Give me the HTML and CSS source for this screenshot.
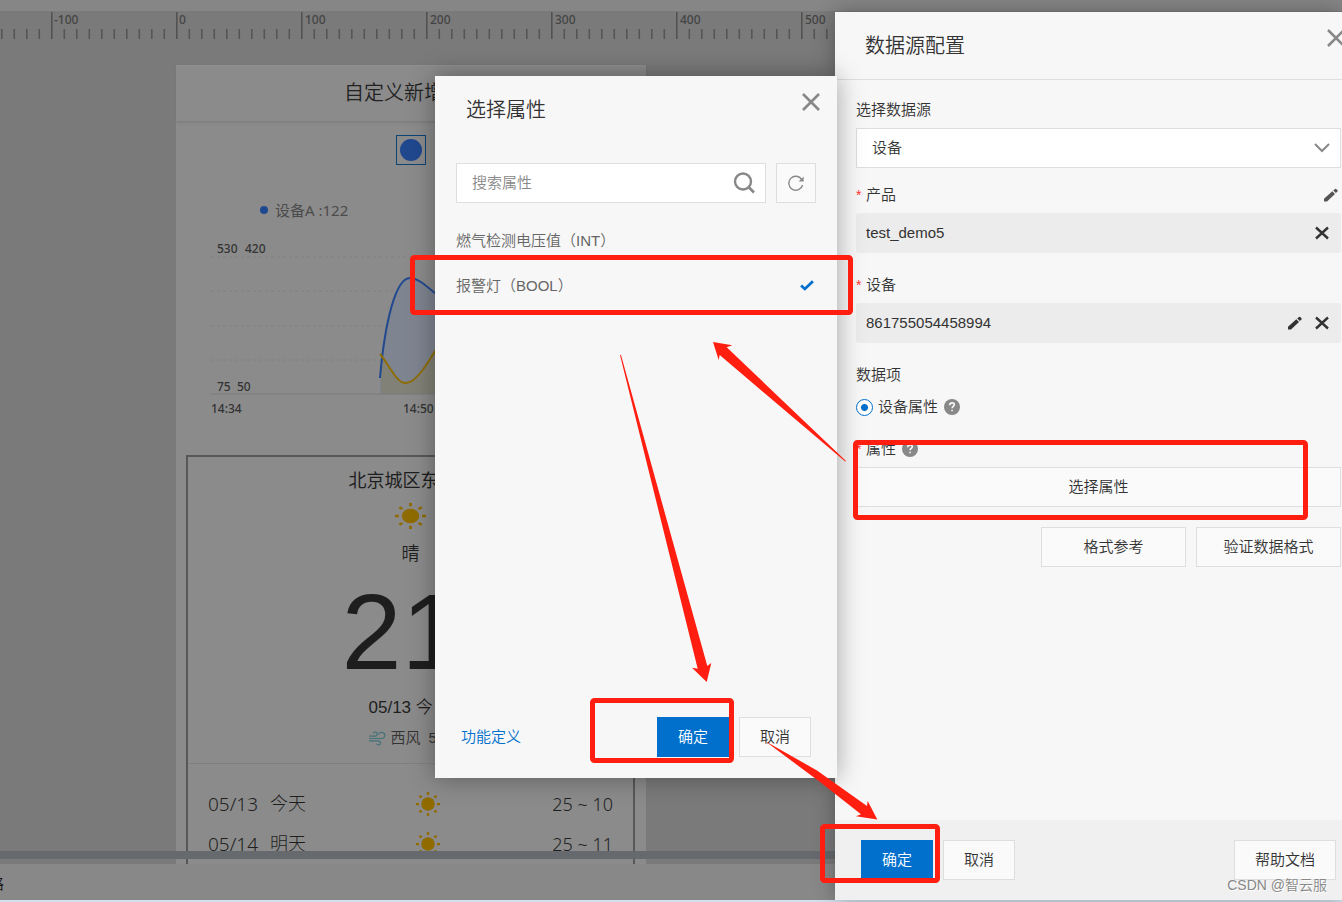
FILE: index.html
```html
<!DOCTYPE html>
<html lang="zh-CN">
<head>
<meta charset="utf-8">
<title>数据源配置</title>
<link rel="stylesheet" href="styles.css">
</head>
<body>
<svg class="defs" aria-hidden="true">
  <symbol id="sun" viewBox="0 0 32 32">
    <circle cx="16" cy="16" r="9"/>
    <path d="M16 0v4M16 28v4M0 16h4M28 16h4M4.500 5l3 2.500M24.500 24.500l3 2.500M27.500 5l-3 2.500M7.500 24.500l-3 2.500" stroke="currentColor" stroke-width="3" fill="none"/>
  </symbol>
  <symbol id="close" viewBox="0 0 18 18"><path d="M1 1l16 16M17 1L1 17" fill="none" stroke="currentColor" stroke-width="2.600"/></symbol>
  <symbol id="cross" viewBox="0 0 14 14"><path d="M1 1.500l12 11M13 1.500L1 12.500" fill="none" stroke="currentColor" stroke-width="2.400"/></symbol>
  <symbol id="pen" viewBox="0 0 14 14"><path d="M0 13.500v-2.700L8.300 3.300l2.700 2.700L3 13.500zM9.200 2.500L11 .9q.6-.5 1.200 0l1.300 1.300q.5.600 0 1.200L11.900 5.100z"/></symbol>
  <symbol id="help" viewBox="0 0 16 16"><circle cx="8" cy="8" r="8"/><path d="M5.700 6.200q.1-2.300 2.400-2.300 2.200 0 2.200 1.900 0 1-1.200 1.700-1 .6-1 1.700M8.100 10.700v1.600" fill="none" stroke="#f7f7f7" stroke-width="1.600"/></symbol>
</svg>

<div class="app">
  <div class="topbar"></div>
  <main class="stage">
    <svg class="ruler" aria-label="标尺">
      <defs>
        <pattern id="ticks" x="51" y="0" width="125" height="29" patternUnits="userSpaceOnUse">
          <path d="M.8 1v27" stroke="#525252" stroke-width="1.600"/>
          <path d="M13.300 18v10M25.800 18v10M38.300 18v10M50.800 18v10M63.300 18v10M75.800 18v10M88.300 18v10M100.800 18v10M113.300 18v10" stroke="#555" stroke-width="1.600"/>
        </pattern>
      </defs>
      <rect width="100%" height="29" fill="url(#ticks)"/>
      <g class="ruler-text">
        <text x="54" y="13">-100</text><text x="179" y="13">0</text><text x="305" y="13">100</text><text x="430" y="13">200</text><text x="555" y="13">300</text><text x="680" y="13">400</text><text x="805" y="13">500</text>
      </g>
    </svg>
    <section class="page">
      <header class="page-title"><span>自定义新增</span></header>
      <div class="marker"><span></span></div>
      <p class="legend"><i></i>设备A :122</p>
      <svg class="chart" viewBox="0 0 440 184">
        <path d="M5 21h430M5 55h430M5 90h430M5 124h430" stroke="#808080" stroke-dasharray="3 3" fill="none"/>
        <path d="M174 142C179 84 190 42 204 42c9 0 17 9 36 24v92h-66z" fill="#7e8490"/>
        <path d="M175 118c9 12 15 29 25 29 10 0 21-18 40-50v61h-65z" fill="#818177"/>
        <path d="M5 158h430" stroke="#7b7b7b"/>
        <path d="M174 142C179 84 190 42 204 42c9 0 17 9 36 24" fill="none" stroke="#21498f" stroke-width="2"/>
        <path d="M174 118c10 12 16 29 26 29 10 0 21-18 40-50" fill="none" stroke="#8e6d08" stroke-width="2"/>
        <text x="11" y="17">530</text><text x="39" y="17">420</text>
        <text x="11" y="155">75</text><text x="31" y="155">50</text>
        <text x="5" y="177">14:34</text><text x="197" y="177">14:50</text>
      </svg>
      <article class="weather">
        <div class="now">
          <h2>北京城区东</h2>
          <svg class="sun-large" preserveAspectRatio="none" viewBox="0 0 32 32"><use href="#sun"/></svg>
          <p class="sky">晴</p>
          <p class="temp">21</p>
          <p class="day">05/13 今</p>
          <p class="wind"><svg viewBox="0 0 18 16"><path d="M0 5.500h6.500a2.200 2.200 0 1 0-2-3M0 8h13.500a3.300 3.300 0 1 0-3.300-4M0 10.500h10a2.200 2.200 0 1 1-2 3" fill="none" stroke="currentColor" stroke-width="1.200"/></svg><span>西风</span><span>5</span></p>
        </div>
        <div class="forecast"><span><b>05/13</b>今天</span><svg><use href="#sun"/></svg><b>25 ~ 10</b></div>
        <div class="forecast"><span><b>05/14</b>明天</span><svg><use href="#sun"/></svg><b>25 ~ 11</b></div>
      </article>
    </section>
    <div class="scrollbar"></div>
  </main>
  <footer class="status"><span>格</span></footer>
</div>

<aside class="drawer">
  <header class="drawer-head"><h1>数据源配置</h1><button class="icon-button" aria-label="关闭"><svg width="18" height="18"><use href="#close"/></svg></button></header>
  <form class="drawer-body">
    <div class="group">
      <label class="label" for="source">选择数据源</label>
      <div class="select-wrap"><select id="source"><option>设备</option></select><svg viewBox="0 0 16 10"><path d="M1 1l7 7 7-7" fill="none" stroke="currentColor" stroke-width="2"/></svg></div>
    </div>
    <div class="group">
      <div class="label"><em>*</em>产品<button type="button" class="icon-button push" aria-label="编辑产品"><svg width="14" height="14"><use href="#pen"/></svg></button></div>
      <div class="value">test_demo5<button type="button" class="icon-button push dark" aria-label="清除产品"><svg width="14" height="14"><use href="#cross"/></svg></button></div>
    </div>
    <div class="group wide">
      <div class="label"><em>*</em>设备</div>
      <div class="value">861755054458994<button type="button" class="icon-button push dark" aria-label="编辑设备"><svg width="14" height="14"><use href="#pen"/></svg></button><button type="button" class="icon-button dark" aria-label="清除设备"><svg width="14" height="14"><use href="#cross"/></svg></button></div>
    </div>
    <div class="group wide">
      <div class="label">数据项</div>
      <div class="radio"><input type="radio" id="prop" name="item" checked><label for="prop">设备属性</label><svg class="help"><use href="#help"/></svg></div>
    </div>
    <div class="group wide">
      <div class="label"><em>*</em>属性<svg class="help"><use href="#help"/></svg></div>
      <button type="button" class="button">选择属性</button>
    </div>
    <div class="pair"><button type="button" class="button">格式参考</button><button type="button" class="button">验证数据格式</button></div>
  </form>
  <footer class="drawer-foot"><button class="button primary">确定</button><button class="button">取消</button><button class="button push">帮助文档</button></footer>
</aside>

<section class="dialog" role="dialog" aria-labelledby="dialog-title">
  <header class="dialog-head"><h2 id="dialog-title">选择属性</h2><button class="icon-button" aria-label="关闭"><svg width="18" height="18"><use href="#close"/></svg></button></header>
  <div class="search-row">
    <div class="search"><input type="text" placeholder="搜索属性" aria-label="搜索属性"><svg viewBox="0 0 22 22"><circle cx="10" cy="9.500" r="8" fill="none" stroke="currentColor" stroke-width="2.400"/><path d="M15.500 15l5.500 5.500" stroke="currentColor" stroke-width="2.600"/></svg></div>
    <button class="button refresh" aria-label="刷新"><svg viewBox="0 0 16 16"><path d="M13.800 4.600A7 7 0 1 0 14.600 10" fill="none" stroke="currentColor" stroke-width="1.400"/><path d="M15.600 1.500v5h-5z" fill="currentColor"/></svg></button>
  </div>
  <ul class="options">
    <li>燃气检测电压值（INT）</li>
    <li>报警灯（BOOL）<svg viewBox="0 0 13 10"><path d="M1 5l3.500 3.200L12 1" fill="none" stroke="#0070cc" stroke-width="2.600"/></svg></li>
  </ul>
  <footer class="dialog-foot"><a href="#">功能定义</a><button class="button primary push">确定</button><button class="button">取消</button></footer>
</section>

<p class="watermark">CSDN @智云服</p>

<svg class="notes" width="1342" height="902" viewBox="0 0 1342 902" aria-hidden="true">
  <g fill="none" stroke="#ff1e10" stroke-width="5">
    <rect x="412.500" y="257.500" width="438" height="55" rx="2"/>
    <rect x="855.500" y="442.500" width="450" height="75" rx="2"/>
    <rect x="592.500" y="700.500" width="139" height="60" rx="2"/>
    <rect x="822.500" y="826.500" width="115" height="54" rx="2"/>
  </g>
  <g fill="#ff1e10">
    <path d="M713 342l19.300 3.300-5.600 2L846 461l-.8.600L719.700 355l-1 5z"/>
    <path d="M620 355h1L707.300 666l4-3-4.600 19-14.700-14.300 5.700 1z"/>
    <path d="M765 741L817 770.500 867 806l.7-5 9.600 18.500-21.300-3.200 5-2L820 782z"/>
  </g>
</svg>
</body>
</html>
```

FILE: styles.css
```css
* { box-sizing: border-box; }
body, h1, h2, p, ul { margin: 0; padding: 0; }
body {
  position: relative;
  height: 100vh;
  overflow: hidden;
  background: #d3e0ee;
  color: #333;
  font: 350 15px/20px "Liberation Sans", "Noto Sans CJK SC", sans-serif;
}
h1, h2 { font-size: 20px; line-height: 30px; font-weight: 350; }
button, input, select { font: inherit; color: inherit; }
svg { display: block; fill: currentColor; flex: none; }
.defs { position: absolute; width: 0; height: 0; }
.push { margin-left: auto; }

/* dimmed editor */
.app { display: flex; flex-direction: column; height: 100%; padding-bottom: 2px; }
.topbar { height: 11px; background: #868686; }
.stage { position: relative; flex: 1; min-height: 0; overflow: hidden; background: #7a7a7a; }
.ruler { width: 100%; height: 54px; }
.ruler-text { font: 500 12px "Noto Sans", sans-serif; fill: #444; }
.page { width: 470px; margin-left: 176px; background: #8b8b8b; }
.page-title { height: 56px; padding: 14px 0 0 168px; border-top: 1px solid #8f8f8f; box-shadow: 0 1px 3px #777; color: #222; font-size: 20px; line-height: 26px; }
.marker { width: 30px; height: 30px; margin: 14px auto 35px; padding: 3px; border: 1px solid #0c4474; }
.marker span { display: block; height: 100%; border-radius: 50%; background: #20488e; }
.legend { display: flex; align-items: center; gap: 7px; padding-left: 84px; color: #4c4c4c; font-family: "Noto Sans", "Noto Sans CJK SC", sans-serif; font-weight: 400; }
.legend i { width: 8px; height: 8px; border-radius: 50%; background: #20488e; }
.chart { width: 440px; height: 184px; margin: 16px 0 35px 30px; font: 500 12px "Noto Sans", sans-serif; fill: #333; }
.weather { height: 480px; margin: 0 11px 0 10px; border: 2px solid #575957; color: #1e1e1e; }
.now { display: flex; flex-direction: column; align-items: center; height: 307px; padding-top: 12px; border-bottom: 1px solid #7f7f7f; }
.now h2 { width: 124px; font-size: 18px; line-height: 24px; font-weight: 400; white-space: nowrap; }
.sun-large { width: 31px; height: 26px; margin: 10px 0; color: #8f6b00; }
.sky { font-size: 18px; line-height: 30px; }
.temp { width: 138px; font-size: 108px; line-height: 126px; }
.day { width: 84px; font-size: 17px; line-height: 26px; white-space: nowrap; }
.wind { display: flex; align-items: center; gap: 5px; width: 84px; line-height: 34px; color: #333; white-space: nowrap; }
.wind svg { width: 17px; height: 15px; color: #427177; }
.wind span + span { margin-left: 3px; }
.forecast { display: grid; grid-template-columns: 6fr 24px 5fr; align-items: center; height: 40px; padding: 0 20px; font-size: 18px; font-weight: 300; }
.now + .forecast { margin-top: 20px; }
.forecast b { font: 300 19px "Noto Sans", sans-serif; }
.forecast span { display: flex; align-items: center; gap: 12px; }
.forecast svg { width: 24px; height: 24px; color: #8f6b00; }
.forecast > b { text-align: right; font-size: 18px; }
.scrollbar { position: absolute; left: 0; right: 0; bottom: 5px; height: 8px; background: #666a6e; }
.status { display: flex; height: 36px; padding-top: 3px; background: #888; color: #111; }
.status span { display: flex; justify-content: flex-end; align-items: center; width: 4px; overflow: hidden; }

/* shared controls */
.button { height: 40px; padding: 0 20px; border: 1px solid #dedede; background: #fafafa; white-space: nowrap; }
.button.primary { padding: 0 21px; border: 0; background: #0070cc; color: #fff; }
.icon-button { display: flex; padding: 0; border: 0; background: none; color: #888; }
.label .icon-button { margin-right: 3px; color: #555; }
.icon-button.dark { color: #333; }

/* configuration drawer */
.drawer { position: absolute; top: 12px; right: 0; bottom: 2px; display: flex; flex-direction: column; width: 507px; overflow: hidden; background: #f7f7f7; box-shadow: 0 0 20px rgba(0, 0, 0, .3); }
.drawer-head { display: flex; justify-content: space-between; height: 68px; padding: 19px 0 0 30px; border-bottom: 1px solid #dedede; }
.drawer-head .icon-button { align-self: flex-start; margin: -2px -3px 0 0; }
.drawer-body { flex: 1; padding: 20px 1px 0 21px; }
.group { margin-bottom: 17px; }
.wide { margin: 22px 0 20px; }
.label { display: flex; align-items: center; height: 20px; margin-bottom: 8px; }
.label em { width: 10px; color: #ff3333; font-style: normal; font-size: 14px; }
.select-wrap { display: grid; align-items: center; }
.select-wrap > * { grid-area: 1 / 1; }
.select-wrap svg { width: 16px; height: 10px; margin-right: 11px; justify-self: end; color: #888; pointer-events: none; }
select { width: 100%; height: 40px; padding: 0 15px; border: 1px solid #dedede; border-radius: 0; background: #fff; appearance: none; }
.value { display: flex; align-items: center; gap: 13px; height: 40px; padding: 0 12px 0 10px; border-radius: 3px; background: #ececec; }
.radio { display: flex; align-items: center; height: 20px; margin-top: 12px; }
.radio input { width: 17px; height: 17px; margin: 0 5px 0 0; border: 1px solid #0070cc; border-radius: 50%; background: radial-gradient(circle, #0070cc 0 3px, #fff 4px); appearance: none; }
.help { width: 16px; height: 16px; margin-left: 6px; color: #888; }
.group > .button { width: 100%; }
.pair { display: flex; justify-content: flex-end; gap: 10px; }
.pair .button { width: 145px; }
.drawer-foot { display: flex; gap: 10px; height: 80px; padding: 20px 6px 0 26px; background: #f0f0f0; }

/* property dialog */
.dialog { position: absolute; top: 76px; right: 505px; bottom: 124px; display: flex; flex-direction: column; width: 402px; padding: 0 21px; background: #f7f7f7; box-shadow: 0 0 24px rgba(0, 0, 0, .35); }
.dialog-head { display: flex; justify-content: space-between; height: 87px; padding: 17px 0 0 10px; }
.dialog-head h2 { line-height: 34px; }
.dialog-head .icon-button { align-self: flex-start; margin-right: -4px; }
.search-row { display: flex; gap: 10px; }
.search { display: flex; flex: 1; align-items: center; height: 40px; padding: 0 10px 0 15px; border: 1px solid #dedede; background: #fff; color: #888; }
.search input { flex: 1; min-width: 0; padding: 0; border: 0; outline: 0; background: none; }
.search input::placeholder { color: #888; }
.search svg { width: 22px; height: 22px; }
.refresh { width: 40px; padding: 0 11px; color: #888; }
.options { flex: 1; padding-top: 15px; color: #666; list-style: none; }
.options li { display: flex; justify-content: space-between; align-items: center; height: 45px; }
.options svg { width: 14px; height: 11px; margin-right: 2px; }
.dialog-foot { display: flex; align-items: center; gap: 10px; height: 61px; padding: 0 5px 21px; }
.dialog-foot a { color: #0070cc; text-decoration: none; }

.watermark { position: absolute; right: 15px; bottom: 7px; color: #888; font-size: 14px; text-shadow: 1px 1px 0 #fff; }
.notes { position: absolute; top: 0; right: 0; pointer-events: none; }
```
